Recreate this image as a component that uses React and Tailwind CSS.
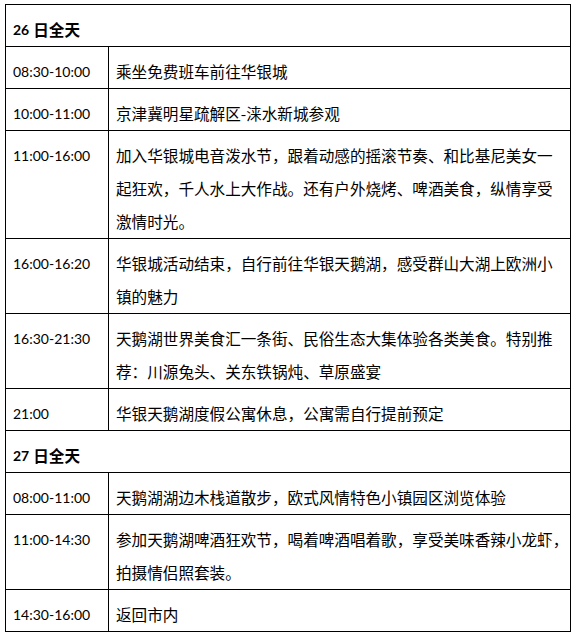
const days = [
  {
    title: "26",
    items: [
      { time: "08:30-10:00", lines: ["乘坐免费班车前往华银城"] },
      { time: "10:00-11:00", lines: ["京津冀明星疏解区-涞水新城参观"] },
      {
        time: "11:00-16:00",
        lines: [
          "加入华银城电音泼水节，跟着动感的摇滚节奏、和比基尼美女一",
          "起狂欢，千人水上大作战。还有户外烧烤、啤酒美食，纵情享受",
          "激情时光。",
        ],
      },
      {
        time: "16:00-16:20",
        lines: ["华银城活动结束，自行前往华银天鹅湖，感受群山大湖上欧洲小", "镇的魅力"],
      },
      {
        time: "16:30-21:30",
        lines: ["天鹅湖世界美食汇一条街、民俗生态大集体验各类美食。特别推", "荐：川源兔头、关东铁锅炖、草原盛宴"],
      },
      { time: "21:00", lines: ["华银天鹅湖度假公寓休息，公寓需自行提前预定"] },
    ],
  },
  {
    title: "27",
    items: [
      { time: "08:00-11:00", lines: ["天鹅湖湖边木栈道散步，欧式风情特色小镇园区浏览体验"] },
      {
        time: "11:00-14:30",
        lines: ["参加天鹅湖啤酒狂欢节，喝着啤酒唱着歌，享受美味香辣小龙虾，", "拍摄情侣照套装。"],
      },
      { time: "14:30-16:00", lines: ["返回市内"] },
    ],
  },
];

export default function App() {
  return (
    <div className="min-h-[639px] bg-white pl-[5px] pt-[4px]">
      <table className="w-[566px] table-fixed border-collapse border border-black text-black">
        <colgroup>
          <col className="w-[103px]" />
          <col />
        </colgroup>
        <tbody>
          {days.map((day) => (
            <>
              <tr key={day.title + "h"}>
                <td colSpan={2} className="border border-black p-0 pl-[7px] pt-[8px] align-top">
                  <div className="flex h-[33px] items-center gap-[4px] font-bold">
                    <span className="font-['Lato',sans-serif] text-[14px]">{day.title}</span>
                    <span className="font-['Noto_Sans_CJK_SC',sans-serif] text-[15.6px]">日全天</span>
                  </div>
                </td>
              </tr>
              {day.items.map((item) => (
                <tr key={day.title + item.time}>
                  <td className="border border-black p-0 pl-[7px] pt-[8px] align-top">
                    <div className="h-[33px] font-['Lato',sans-serif] text-[14px] leading-[33px]">{item.time}</div>
                  </td>
                  <td className="whitespace-nowrap border border-black p-0 pl-[7px] pt-[8px] align-top">
                    {item.lines.map((line, i) => (
                      <div key={i} className="h-[33px] font-['Noto_Sans_CJK_SC',sans-serif] text-[15.6px] leading-[33px]">
                        {line}
                      </div>
                    ))}
                  </td>
                </tr>
              ))}
            </>
          ))}
        </tbody>
      </table>
    </div>
  );
}
